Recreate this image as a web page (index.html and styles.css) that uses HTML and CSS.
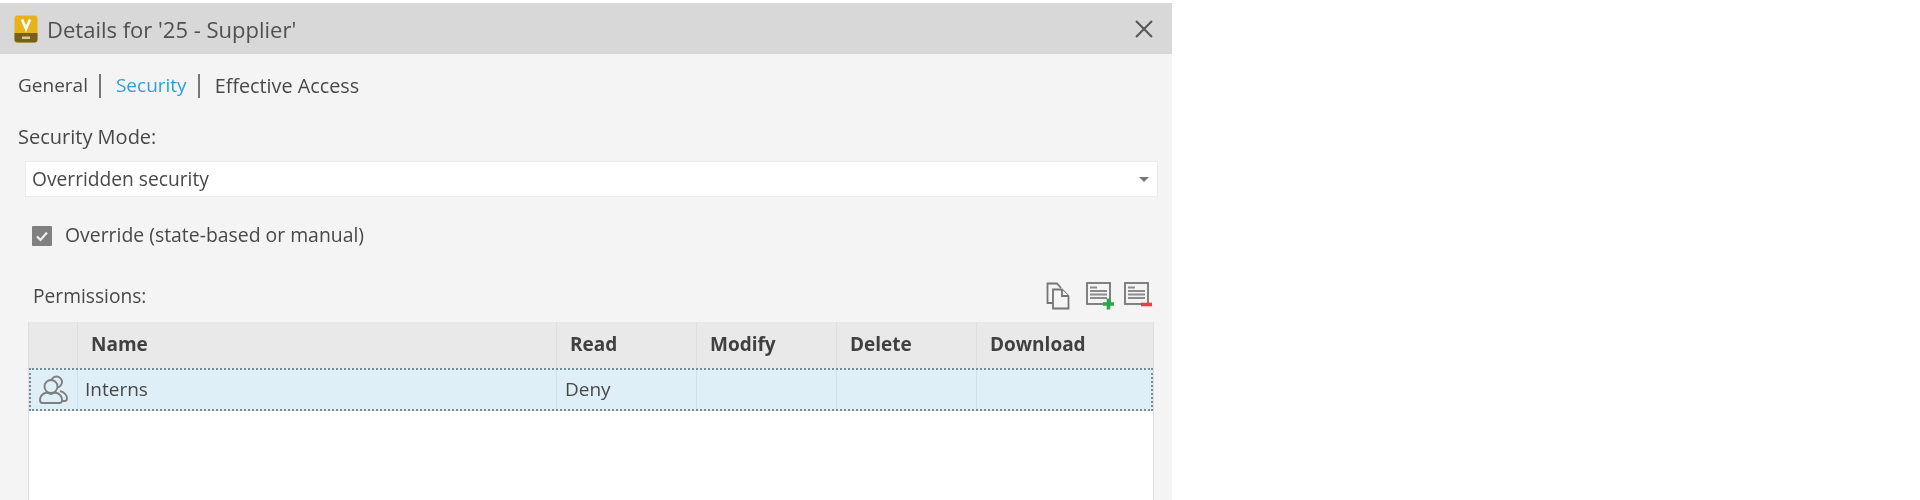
FILE: index.html
```html
<!DOCTYPE html>
<html lang="en">
<head>
<meta charset="utf-8">
<title>Details for '25 - Supplier'</title>
<link rel="stylesheet" href="styles.css">
</head>
<body>
<div class="dialog">
  <header class="titlebar">
    <svg class="app-icon" width="24" height="28" viewBox="0 0 24 28">
      <rect x="0.5" y="0.500" width="23" height="27" rx="3" fill="#e8b31a"/>
      <path d="M0.500 18H23.500V24.500a3 3 0 0 1-3 3H3.500a3 3 0 0 1-3-3Z" fill="#75601c"/>
      <path d="M8 4.500 12 14 16 4.500" fill="none" stroke="#fff" stroke-width="2.600"/>
      <rect x="8" y="21.500" width="8" height="2.500" fill="#d8c98e"/>
    </svg>
    <span class="title">Details for '25 - Supplier'</span>
    <svg class="close" width="20" height="20" viewBox="0 0 20 20">
      <path d="M2 2 18 18M18 2 2 18" stroke="#555" stroke-width="2" fill="none"/>
    </svg>
  </header>
  <main class="content">
    <nav class="tabs">
      <span>General</span><i class="sep"></i>
      <span class="active">Security</span><i class="sep"></i>
      <span class="tab-wide">Effective Access</span>
    </nav>
    <div class="mode-label">Security Mode:</div>
    <div class="select">
      <span>Overridden security</span>
      <i class="caret"></i>
    </div>
    <label class="override">
      <svg width="20" height="20" viewBox="0 0 20 20">
        <rect width="20" height="20" rx="1" fill="#808080"/>
        <path d="M5 10.500 8.500 14 15 6.500" fill="none" stroke="#eee" stroke-width="2.200"/>
      </svg>
      <span class="override-text">Override (state-based or manual)</span>
    </label>
    <div class="perm-head">
      <span class="perm-label">Permissions:</span>
      <div class="tools">
        <svg class="tool-copy" width="24" height="28" viewBox="0 0 24 28" fill="#f4f4f4" stroke="#757575" stroke-width="1.800">
          <path d="M8 21H1.500V1.500H11L15 6"/>
          <path d="M7 7.500H16L22.500 14V26.500H7Z"/>
          <path d="M16 7.500V14H22.500"/>
        </svg>
        <svg width="29" height="28" viewBox="0 0 29 28">
          <rect x="1" y="1" width="23" height="21" fill="#f4f4f4" stroke="#757575" stroke-width="1.800"/>
          <path d="M4 5.500H11M4 9H21M4 12.500H21M4 16H21" stroke="#8c8c8c" stroke-width="1.800"/>
          <path d="M22.500 16.500V27.500M17 22H28" stroke="#27a84a" stroke-width="3.600"/>
        </svg>
        <svg width="28" height="28" viewBox="0 0 28 28">
          <rect x="1" y="1" width="23" height="21" fill="#f4f4f4" stroke="#757575" stroke-width="1.800"/>
          <path d="M4 5.500H11M4 9H21M4 12.500H21M4 16H21" stroke="#8c8c8c" stroke-width="1.800"/>
          <path d="M17 22.500H28" stroke="#ee3b45" stroke-width="3.600"/>
        </svg>
      </div>
    </div>
    <section class="table">
      <div class="row head">
        <div class="cell"></div>
        <div class="cell">Name</div>
        <div class="cell">Read</div>
        <div class="cell">Modify</div>
        <div class="cell">Delete</div>
        <div class="cell">Download</div>
      </div>
      <div class="row selected">
        <div class="cell icon-cell">
          <svg width="30" height="30" viewBox="0 0 30 30" fill="none" stroke="#7f7f7f" stroke-width="1.900">
            <circle cx="18.500" cy="7" r="5.500"/>
            <path d="M22 16c4 1 7 4 7 7.500 0 1.500-1 2.500-2.500 2.500H24"/>
            <circle cx="13" cy="11.500" r="6.500" fill="#dfeff8"/>
            <path d="M2 25c0-4 3-6.500 6.500-7.500l4.500 1.500 4.500-1.500c3.500 1 6.500 3.500 6.500 7.500 0 2-1 3-2.500 3H4.500C3 28 2 27 2 25Z" fill="#dfeff8"/>
          </svg>
        </div>
        <div class="cell name-cell">Interns</div>
        <div class="cell">Deny</div>
        <div class="cell"></div>
        <div class="cell"></div>
        <div class="cell"></div>
      </div>
    </section>
  </main>
</div>
</body>
</html>
```

FILE: styles.css
```css
* { box-sizing: border-box; }
html, body { margin: 0; height: 100%; overflow: hidden; background: #fff; }
body { padding-top: 3px; }
.dialog {
  width: 1172px;
  height: 497px;
  background: #f4f4f4;
  font-family: "Open Sans", "Noto Sans", sans-serif;
  font-size: 19px;
  color: #484848;
  filter: blur(0.7px);
  overflow: hidden;
}
.titlebar {
  height: 51px;
  background: #d8d8d8;
  display: flex;
  align-items: center;
  padding: 0 18px 0 14px;
}
.title { margin-left: 9px; font-size: 22px; flex: 1; color: #505050; }
.content { padding: 18px 18px 0 18px; }
.tabs { display: flex; align-items: center; height: 28px; padding-bottom: 2px; font-size: 19px; }
.tabs .active { color: #2f9fd8; }
.tab-wide { font-size: 19.800px; }
.sep { width: 2px; height: 24px; background: #777; margin: 2px 15px 0 11px; }
.mode-label { margin-top: 23px; height: 28px; line-height: 28px; font-size: 20px; }
.select {
  margin: 10px 0 0 7px;
  height: 36px;
  width: 1133px;
  background: #fff;
  border: 1px solid #ececec;
  display: flex;
  align-items: center;
  justify-content: space-between;
  padding: 0 7px 2px 6px;
  font-size: 19.200px;
}
.caret { width: 0; height: 0; border: 5px solid transparent; border-top: 5px solid #777; border-bottom: 0; margin: 2px 1px 0 0; }
.override { display: flex; align-items: center; gap: 13px; margin: 29px 0 0 14px; height: 20px; font-size: 19.400px; }
.override-text { margin-top: -3px; }
.perm-head { display: flex; align-items: center; justify-content: space-between; margin: 32px 0 0 15px; height: 36px; width: 1119px; font-size: 19.200px; }
.perm-label { margin-top: -2px; }
.tools { display: flex; gap: 9px; align-items: flex-start; height: 28px; }
.tool-copy { margin-right: 7px; }
.table {
  margin: 8px 0 0 10px;
  width: 1126px;
  height: 200px;
  background: #fff;
  border: 1px solid #dedede;
  border-top: 0;
}
.row { display: grid; grid-template-columns: 48px 479px 140px 140px 140px 1fr; }
.head { height: 46px; background: #e9e9e9; font-weight: 700; color: #404040; align-items: stretch; }
.head .cell { display: flex; align-items: center; padding: 0 0 3px 13px; border-left: 1px solid #dfdfdf; }
.head .cell:first-child { border-left: 0; }
.selected { height: 43px; background: #dfeff8; outline: 2px dotted #7d8a92; outline-offset: -2px; }
.selected .cell { display: flex; align-items: center; padding: 0 0 2px 8px; border-left: 1px solid #cfe0ea; }
.selected .cell:first-child { border-left: 0; }
.selected .name-cell { padding-left: 7px; }
.selected .icon-cell { padding: 0 0 0 9px; }
```
